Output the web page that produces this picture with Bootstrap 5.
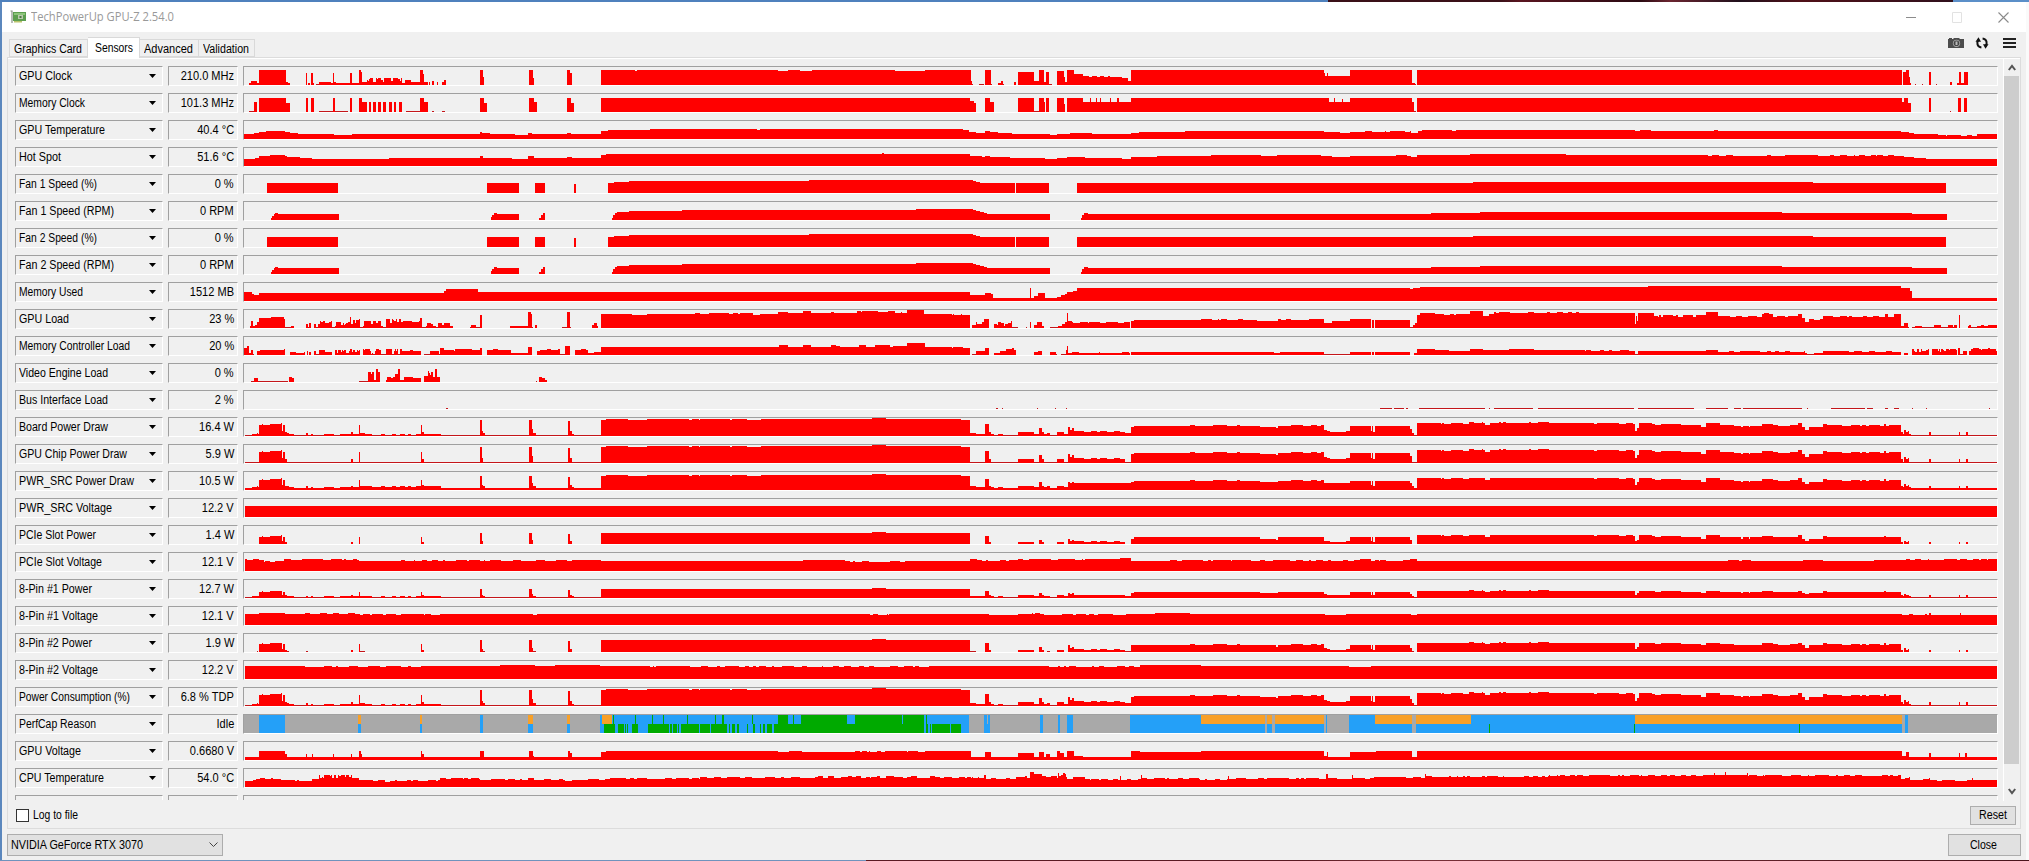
<!DOCTYPE html>
<html lang="en">
<head>
<meta charset="utf-8">
<title>TechPowerUp GPU-Z 2.54.0</title>
<link rel="stylesheet" href="https://cdn.jsdelivr.net/npm/bootstrap@5.3.0/dist/css/bootstrap.min.css">
<style>
html,body{height:100%;overflow:hidden}
body{font:12px/14px "Liberation Sans",Arial,sans-serif;color:#000;background:#f0f0f0}
.frame-top{height:2px;background:linear-gradient(90deg,#4f81bd 0 1328px,#3a1018 1328px 1500px,#5a1520 1520px,#2a0a12 1640px,#6b2530 1670px,#20101c 1740px,#501018 1800px,#30101c 1953px,#5b8fc8 1953px)}
.frame-bottom{height:1px;background:linear-gradient(90deg,#6f93bd 0 866px,#5a1a22 866px 1300px,#7a3038 1400px,#4a141c)}
.frame-left{width:2px;background:#5b87bd}
.frame-right{width:3px;background:#fafafa}
.titlebar{height:30px;padding:0 17px 0 8px;background:#fff}
.caption{font:12px/16px "Open Sans",sans-serif;color:#999;margin-left:5px}
.ctl{gap:35px}
.toolrow{height:25px;padding:0 9px 0 7px}
.tabs{height:20px}
.tab-item{height:18px;border:1px solid #d9d9d9;border-left:0;padding-top:2px;white-space:nowrap}
.tab-item:first-child{border-left:1px solid #d9d9d9}
.tab-item .fit{margin-left:4px}
.tab-item.active{height:21px;background:#fff;border-bottom:0;padding-top:3px;position:relative;z-index:2;margin-bottom:-1px}
.tab-item.active .fit{margin-left:7px}
.tool-icons{gap:10px;padding-top:3px}
.page{margin:0 5px;height:772px;border:1px solid #dcdcdc;box-shadow:inset 0 1px #fff}
.sensors{height:742px;padding:8px 5px 0 7px;overflow:hidden}
.sensor{height:20px;margin-bottom:7px}
.sunk{border:1px solid;border-color:#a0a0a0 #fff #fff #a0a0a0;height:20px;overflow:hidden;flex:none}
.name{width:148px;padding:0 6px 0 3px}
.reading{width:70px;margin:0 5px;padding-right:3px}
.reading span{white-space:nowrap;transform:scaleX(.92);transform-origin:right}
.plot{width:1755px}
.sunk svg,.name svg{display:block;flex:none}
.scrollbar-v{width:17px;height:742px;margin-top:1px;border-left:1px solid #fff;padding-right:1px}
.thumb{height:688px;background:#cdcdcd}
.arrow-cell{height:17px}
.arrow-cell.down{height:36px;padding-top:18px}
.logrow{height:28px;padding:0 4px 0 8px}
.box{width:13px;height:13px;border:1px solid #333;background:#fff}
.push{background:#e1e1e1;border:1px solid #adadad;border-radius:0;font-size:12px;line-height:14px;padding:0;color:#000}
.push.btn{text-align:left}
.footer-row{padding:5px 5px 0;height:31px}
.combo{width:216px;height:22px;padding:0 4px 0 3px}
.fit{display:inline-block;white-space:nowrap;transform-origin:left}
</style>
</head>
<body class="d-flex flex-column">
<div class="frame-top flex-shrink-0"></div>
<div class="d-flex flex-grow-1">
<div class="frame-left flex-shrink-0"></div>
<main class="flex-grow-1">
<header class="titlebar d-flex align-items-center">
<svg width="16" height="14" viewBox="0 0 16 14"><path d="M.5 1h1.500v12" fill="none" stroke="#8a938a" stroke-width="1.2"/><path d="M3 2h13v9H3z" fill="#5c9e4f"/><path d="M4 3h11v2H4z" fill="#8cc47a"/><path d="M8 5h5v4H8z" fill="#b8c9ad"/><path d="M9.500 6h2v2h-2z" fill="#4e7443"/><path d="M4 11h8v1.500H4z" fill="#b9c36b"/></svg>
<span class="caption me-auto"><span class="fit" data-w="143">TechPowerUp GPU-Z 2.54.0</span></span>
<div class="ctl d-flex align-items-center">
<svg width="11" height="11"><path d="M0 5.500h10" stroke="#8c8c8c"/></svg>
<svg width="11" height="11"><path d="M.5.5h9v10h-9z" fill="none" stroke="#e2e2e2"/></svg>
<svg width="11" height="11"><path d="M.5.5l10 10m0-10l-10 10" stroke="#8a8a8a" stroke-width="1.1"/></svg>
</div>
</header>
<div class="toolrow d-flex align-items-end">
<div class="tabs d-flex align-items-end me-auto">
<div class="tab-item" style="width:79px"><span class="fit" data-w="68">Graphics Card</span></div><div class="tab-item active" style="width:52px"><span class="fit" data-w="38">Sensors</span></div><div class="tab-item" style="width:59px"><span class="fit" data-w="49">Advanced</span></div><div class="tab-item" style="width:56px"><span class="fit" data-w="46">Validation</span></div>
</div>
<div class="tool-icons d-flex align-self-start align-items-center">
<svg width="17" height="16" viewBox="0 0 17 16"><path d="M0 4h1V3h3v1h1l1-1h5l1 1h4v9H0z" fill="#4c4c4c"/><circle cx="8.500" cy="8.300" r="3.600" fill="#aaa"/><circle cx="8.500" cy="8.300" r="2.800" fill="#444"/><path d="M7.500 6.500h2v3.500h-2z" fill="#bbb"/></svg>
<svg width="14" height="16" viewBox="0 0 14 16" fill="none" stroke="#111" stroke-width="2"><path d="M6.400 12.500C2 12 1.500 7.500 3.400 5.200"/><path d="M7.600 3.500C12 4 12.500 8.500 10.600 10.800"/><path d="M.5 6.800L3.500 2.300 6 6.800zM8 9.200h5.500L10.500 13.700z" fill="#111" stroke="none"/></svg>
<svg class="ms-1" width="14" height="16" viewBox="0 0 14 16"><path d="M0 4h13M0 8h13M0 12h13" stroke="#222" stroke-width="2"/></svg>
</div>
</div>
<section class="page">
<div class="d-flex">
<div class="sensors flex-grow-1" id="sensors"></div>
<div class="scrollbar-v flex-shrink-0">
<div class="arrow-cell d-flex align-items-center justify-content-center"><svg width="8" height="7"><path d="M.8 6L4 1.800 7.200 6" fill="none" stroke="#555" stroke-width="2"/></svg></div>
<div class="thumb"></div>
<div class="arrow-cell down d-flex align-items-center justify-content-center"><svg width="8" height="7"><path d="M.8 1L4 5.200 7.200 1" fill="none" stroke="#555" stroke-width="2"/></svg></div>
</div>
</div>
<div class="logrow d-flex align-items-center">
<label class="d-flex align-items-center me-auto"><span class="box"></span><span class="fit ms-1" data-w="45">Log to file</span></label>
<button class="btn push d-flex align-items-center" style="width:46px;height:19px;padding-left:8px"><span class="fit" data-w="28">Reset</span></button>
</div>
</section>
<div class="footer-row d-flex align-items-start">
<div class="push combo d-flex align-items-center justify-content-between me-auto"><span class="fit" data-w="132">NVIDIA GeForce RTX 3070</span><svg width="9" height="6"><path d="M.5.5l4 4 4-4" fill="none" stroke="#444"/></svg></div>
<button class="btn push d-flex align-items-center" style="width:73px;height:22px;padding-left:21px"><span class="fit" data-w="27">Close</span></button>
</div>
</main>
<div class="frame-right flex-shrink-0"></div>
</div>
<div class="frame-bottom flex-shrink-0"></div>

<script src="https://cdn.jsdelivr.net/npm/bootstrap@5.3.0/dist/js/bootstrap.bundle.min.js"></script>
<script>
// Histories are "x height" step pairs; "h~j" lets the height dip by up to j, in short runs.
const X0 = 244, XEND = 2000, H = 18;
// Samples after 1340 are spaced slightly tighter.
const px = x => (x <= 1340 ? x : Math.round(1340 + (x - 1340) * .9955)) - X0;
let seed = 7;
const rnd = () => (seed = (seed * 16807) % 2147483647) / 2147483647;
function expand(text) {
  const t = text.trim().split(/[\s,]+/), out = [];
  for (let i = 0; i < t.length; i += 2) {
    const x = +t[i], end = i + 2 < t.length ? +t[i + 2] : XEND;
    const [h, j] = t[i + 1].split('~').map(Number);
    if (!j) { out.push([x, end, h]); continue; }
    for (let p = x; p < end;) {
      const n = Math.min(end, p + 1 + Math.floor(rnd() * (j > 2 ? 2 : 7)));
      out.push([p, n, h - (rnd() < .5 ? Math.ceil(rnd() * j) : 0)]);
      p = n;
    }
  }
  return out;
}
function chart(segs) {
  let a = '', b = '';
  for (const [x, e, h] of segs) {
    if (h <= 0) continue;
    const r = `M${px(x)} ${H}v${-h}H${px(e)}v${h}z`;
    if (h <= 1) b += r; else a += r;
  }
  return `<path d="${a}" fill="#f00"/><path d="${b}" fill="#c4161a"/>`;
}
const draw = `245 1,252 2,257 3,258 2,259 11,262 12~1,281 13,282 5,283 11,285 4,287 3,289 2,294 1,306 3,308 1,311 2,313 1,318 2~1,351 4,353 2,359 11,360 3,365 2~1,406 2~1,420 2,421 11,422 4,424 2,441 1,480 16,482 5,483 3,485 1,529 16,532 7,533 3,536 1,568 15,570 5,572 2,574 1,601 16,606 17,628 16,636 16~1,647 17,684 17~1,703 17,730 17~1,753 16,761 17,872 18,886 17,961 16,970 3,976 2,985 12,989 4,991 2,994 1,998 2,1003 1,1018 4,1034 2,1039 8,1042 4,1044 2,1047 3,1050 1,1057 4,1064 2,1068 9,1070 6,1072 8,1074 5,1084 5~1,1125 3,1131 9,1134 10,1190 11~1,1240 10,1260 9,1276 8,1278 11~1,1324 6,1327 5,1330 4,1346 5,1350 10,1371 5,1372 10,1373 4,1375 10,1410 7,1412 3,1414 1,1417 13,1434 13~1,1470 14~1,1486 11,1491 13,1500 14~1,1550 13,1590 13~1,1636 5,1638 8,1640 13~1,1656 12~1,1703 9,1708 13,1722 12~1,1736 10~1,1764 12,1775 11~1,1800 13,1804 9,1807 6,1811 9~1,1825 12,1829 11~1,1886 12,1888 10,1891 11,1904 4,1906 2,1907 6,1909 4,1911 5,1912 2,1914 1,1932 4,1934 1,1962 4,1963 1,1969 4,1971 1`;
function power(scale, base, cut) {
  seed = 7;
  return expand(draw).map(([x, e, h]) => [x, e, h < cut ? base : Math.max(base, Math.round(base + (h - 1) * scale))]);
}
const fan = '267 10,338 0,487 10,519 0,535 10,545 0,574 9,576 0,608 10,614 11,629 12,809 13,973 12,976 11,980 10,1015 0,1016 10,1049 0,1077 10,1474 11,1815 10,1949 0';
const rpm = '271 2,272 4,274 6,275 7,278 6,339 0,491 3,492 5,494 7,497 6,519 0,539 2,541 5,543 7,545 0,612 2,613 5,615 7,617 8,629 9,682 10,916 11,973 10,976 9,980 8,984 7,987 6,1050 0,1081 2,1082 5,1084 7,1088 6,1431 7,1481 8,1784 7,1915 6,1950 0';
const rows = [
 ['GPU Clock',53,'210.0 MHz','249 2,251 4~1,257 2,259 15,286 3,288 2,290 0,306 12,307 0,308 2,310 0,311 12,313 2,314 0,316 1,319 3~1,333 12,334 3,336 2,350 12,352 3~1,359 15,361 13,362 3,367 7~4,402 2,405 5~2,420 15,423 11,424 3,428 0,429 3,430 0,432 4,434 0,437 3,438 0,442 3,444 5,446 0,480 15,483 8,484 0,529 15,533 7,534 0,567 15,570 12,572 0,601 15,635 14,637 15,778 14,788 15,800 14,812 15,895 14,925 15,971 4,972 1,973 0,979 1,984 0,985 15,991 1,992 0,998 2,1001 4,1003 1,1004 0,1014 3,1016 0,1018 13,1034 4,1039 15,1044 3,1046 13,1049 1,1052 0,1057 14,1064 8,1065 3,1067 15,1074 11,1083 9~1,1110 8,1122 7,1128 4,1131 15,1324 12,1325 9,1327 12,1328 9,1350 15,1412 2,1415 1,1416 0,1417 15,1905 0,1906 13,1909 15,1912 8,1913 2,1914 0,1918 1,1919 0,1925 1,1926 0,1932 13,1934 0,1939 1,1940 0,1953 3,1955 0,1960 2,1962 13,1964 2,1967 13,1971 0'],
 ['Memory Clock',66,'101.3 MHz','249 1,254 10,257 0,259 14,286 9,290 0,306 14,308 0,311 14,314 0,319 1,333 14,335 1,348 0,350 14,352 0,359 14,362 10,367 0,369 10,371 0,373 10,376 0,378 10,381 0,383 10,386 0,389 10,392 0,394 10,396 0,399 10,402 0,406 1,420 14,424 10,428 0,432 1,434 0,442 1,445 0,480 14,484 9,487 0,529 14,534 10,537 0,567 14,571 9,574 0,601 14,970 11,974 9,976 0,985 14,990 10,994 0,1018 14,1034 1,1039 14,1044 10,1045 0,1046 14,1049 0,1057 14,1064 8,1065 0,1067 14,1083 10,1090 14,1091 10,1096 14,1097 10,1100 14,1101 10,1110 14,1111 10,1117 14,1119 10,1131 14,1329 10,1334 14,1335 10,1342 13,1343 10,1350 14,1412 10,1414 1,1416 0,1417 14,1905 10,1907 14,1911 9,1914 0,1932 14,1934 0,1953 1,1954 0,1961 14,1964 0,1967 14,1970 0'],
 ['GPU Temperature',86,'40.4 °C','244 5,254 6,259 7,266 8,285 7,290 6,298 5,334 4,352 5,480 7,482 6,490 5,515 4,528 6,532 5,567 6,571 5,601 8,608 9,650 10,757 9,760 10,963 9,969 7,976 6,985 8,990 7,998 6,1012 5,1050 4,1057 5,1070 6,1092 5,1131 6,1139 7,1185 8,1324 7,1340 6,1350 7,1360 8~1,1411 6,1418 8,1422 9,1453 8,1457 9,1467 9,1636 8,1641 9,1652 8,1716 9,1720 8,1904 7,1912 6,1917 5,1941 4~1,1980 5'],
 ['Hot Spot',42,'51.6 °C','244 7,255 8,259 10,270 11,285 10,287 9,300 8,312 7,389 8,480 10,483 8,512 7,528 10,534 8,567 9,572 8,601 11,606 12,882 13,884 12,970 10,982 9,985 10,990 9,1010 8,1045 7,1057 8,1067 9,1085 8,1122 7,1131 9,1157 10,1211 11,1261 10,1277 11,1321 10,1332 9,1350 10,1396 11~1,1411 9,1417 11,1471 12,1495 12,1567 11,1696 11~1,1740 10,1765 11~1,1900 10,1907 9,1917 8,1929 7'],
 ['Fan 1 Speed (%)',78,'0 %',fan],['Fan 1 Speed (RPM)',95,'0 RPM',rpm],['Fan 2 Speed (%)',78,'0 %',fan],['Fan 2 Speed (RPM)',95,'0 RPM',rpm],
 ['Memory Used',64,'1512 MB','244 9,252 7,254 6,259 8,444 10,446 12,478 9,970 6,985 8,991 7,993 3,1030 13,1031 3,1034 5,1038 8,1045 3,1057 4,1061 6,1065 7,1067 9,1073 10,1077 13,1410 12,1413 13,1420 14,1649 15,1904 13,1913 10,1915 3'],
 ['GPU Load',50,'23 %','250 2,251 7,253 2,255 3,257 6,259 10,271 11,284 9,285 1,291 2,294 0,306 4,308 1,309 5,311 0,314 4,316 1,318 7~3,332 1,335 6~4,350 11,351 4,353 8~5,359 9,360 1,363 7~5,383 1,386 9~5,402 7~1,420 10,422 1,424 5~4,450 2,453 0,470 3~2,480 13,482 0,510 2,528 16,531 14,532 1,533 0,535 3,537 0,562 1,567 16,570 1,571 0,592 3,594 5,597 2,598 0,601 14,632 13,647 14,695 15~1,753 13,760 14,778 16,788 15,803 17,811 15,831 16,834 15,857 17~1,895 15,901 16~1,907 18,924 14,950 14~1,962 13,970 0,972 3,976 6~2,984 9,989 0,994 4~3,998 6,1001 5~4,1011 7,1012 1,1018 0,1026 1,1027 0,1030 6,1031 0,1034 3,1037 6,1042 2,1044 0,1050 1,1058 2,1062 4,1065 6,1067 15,1068 7,1072 6~1,1130 0,1131 7,1134 8,1201 9~1,1257 7,1278 9~1,1324 5~1,1332 7~1,1350 9,1371 0,1372 8,1374 0,1375 8,1410 1,1413 3,1415 5,1417 13,1420 15,1435 14~1,1471 17,1484 14~2,1495 16~1,1580 15,1636 4,1637 12,1638 7,1639 15,1655 13~2,1708 16,1720 12~1,1764 15~1,1775 12~1,1800 14,1804 10,1807 6,1811 9~1,1825 12~1,1887 14,1890 11,1897 14,1904 2,1907 5,1911 1,1912 0,1915 2~1,1937 3~2,1960 0,1962 13,1963 0,1971 3~2'],
 ['Memory Controller Load',111,'20 %','244 7,247 9,249 2,251 5,253 1,254 0,257 4,260 6~1,285 0,290 3~1,305 0,307 4,308 0,309 3,311 0,314 4,316 1,319 5~2,332 0,335 5~3,350 6,352 5~4,360 0,363 6~5,383 1,386 6~5,402 5~1,421 0,424 4~3,440 7,444 5~1,455 7~1,472 5~1,480 7,482 0,487 6~1,511 2,528 8,532 0,537 4,540 6~1,560 1,565 9,570 0,575 6~1,588 3~1,601 8,779 10,788 8,803 10,811 8,831 10~1,840 8,857 10~2,895 9,907 12,925 8,945 8~1,964 7,970 0,972 1,976 4~2,985 7,989 0,994 4~2,1006 7~1,1014 5,1016 0,1034 3,1038 4,1042 0,1050 3,1056 1,1057 0,1061 1,1066 5,1067 9,1068 2,1072 3~1,1130 0,1131 3,1260 3~1,1280 3,1324 1,1350 3,1371 0,1372 3,1374 0,1375 3,1410 0,1414 2,1417 6,1435 5~1,1471 6,1484 5,1510 6,1535 5,1580 5~1,1636 1,1639 4,1708 5,1720 4~1,1807 2~1,1825 4~1,1904 0,1907 2,1911 0,1915 6~3,1932 0,1935 6~3,1960 0,1961 7,1963 1,1966 4,1970 0,1972 7~3'],
 ['Video Engine Load',89,'0 %','251 1,254 4,258 1,288 0,289 5,292 4,294 0,359 1,368 10~2,374 2,376 13,378 10,380 0,386 5~4,395 8,398 13,400 2,404 5~2,421 0,424 6,428 11~6,435 13,437 5,440 0,536 1,537 0,539 5,542 4,545 2,547 0'],
 ['Bus Interface Load',89,'2 %','446 1,448 0,996 1,998 0,1002 1,1003 0,1037 1,1038 0,1055 1,1056 0,1066 1,1067 0,1380 1,1392 0,1394 1,1404 0,1406 1,1408 0,1419 1,1486 0,1490 1,1491 0,1495 1,1534 0,1539 1,1635 0,1639 1,1696 0,1708 1,1730 0,1736 1,1743 0,1745 1,1804 0,1809 1,1810 0,1833 1,1867 0,1869 1,1875 0,1887 1,1890 0,1897 1,1902 0,1915 1,1916 0,1929 1,1930 0,1992 1,1993 0'],
 ['Board Power Draw',89,'16.4 W',power(1,1,2)],
 ['GPU Chip Power Draw',108,'5.9 W',power(1,1,4)],
 ['PWR_SRC Power Draw',115,'10.5 W',power(.8,2,2).map(([x,e,h])=>[x,e,(x>1067&&x<1131)||(x>=1324&&x<1350)?Math.max(h,7):x>290&&x<440&&h<5?h+(x>360?1:0):h])],
 ['PWR_SRC Voltage',93,'12.2 V','245 11'],
 ['PCIe Slot Power',77,'1.4 W',power(.64,0,4).map(([x,e,h])=>[x,e,h>5?h+1:h])],
 ['PCIe Slot Voltage',83,'12.1 V','245 12~1,259 11,264 10~1,284 12~1,359 10,362 11~1,480 10,484 11~1,529 10,536 11~1,568 10,572 11,601 10,770 10,803 11,845 10~1,905 10,970 12,977 11~1,1018 12~1,1085 12,1120 13,1131 10,1170 11~1,1360 12,1371 11~1,1410 12,1417 10,1700 10,1730 11~1,1760 10,1805 11,1825 10,1876 11,1904 12~1'],
 ['8-Pin #1 Power',73,'12.7 W',power(.5,1,2)],
 ['8-Pin #1 Voltage',79,'12.1 V','245 11~1,259 12,285 11,305 12~1,360 11~1,440 11,533 10,537 11,866 11~1,925 11,989 10,1018 12~1,1040 11~1,1131 11,1155 12,1190 11,1325 10,1346 11,1411 10,1417 11,1904 11~1,1932 12,1934 10,1963 12,1964 10'],
 ['8-Pin #2 Power',73,'1.9 W',power(.7,0,3).map(([x,e,h])=>[x,e,h>5?h+1:h])],
 ['8-Pin #2 Voltage',79,'12.2 V','245 13,305 13~1,425 13,500 14,535 13,555 14,600 13,650 13~1,930 13,1048 13~1,1140 14,1201 13,1349 12,1371 13'],
 ['Power Consumption (%)',111,'6.8 % TDP',power(1,1,2)],
 ['PerfCap Reason',77,'Idle',null],
 ['GPU Voltage',62,'0.6680 V','245 3,259 9,285 6,287 3,306 6,307 3,312 6,313 3,333 6,334 3,351 6,352 3,359 9,361 6,362 3,421 9,422 6,424 3,480 9,484 3,529 9,533 4,534 3,568 9,570 7,572 3,601 8,606 9,778 8,789 9,802 8,848 9~1,925 9,971 3,985 8,991 3,1018 7,1034 3,1039 8,1044 3,1046 6,1050 3,1057 9,1060 7,1064 3,1067 9,1074 4,1083 3,1130 3,1131 9,1140 8,1201 9,1324 4,1327 8,1328 3,1350 8,1376 9,1412 3,1417 9,1905 4,1909 8,1912 3,1932 7,1934 3,1962 7,1963 3,1968 7,1970 3'],
 ['CPU Temperature',85,'54.0 °C','245 7~1,256 9~1,275 8~1,295 7~1,312 9~1,319 12~3,355 9,359 7~2,395 7~1,440 9~1,480 8~1,528 10~2,534 8~1,565 6,572 8~1,605 9~1,700 10~1,800 11~2,935 10~1,984 12,986 9~1,1016 11~2,1030 15,1034 13~2,1042 11~2,1058 14~3,1066 10~2,1085 8~1,1120 11,1121 8~1,1141 12,1142 9~1,1200 8~1,1228 11,1229 9~1,1326 13,1328 9~1,1352 12,1353 9~1,1374 10~1,1425 13,1426 11~1,1550 12,1551 12~1,1716 14,1717 12~1,1727 15,1728 12~1,1749 14,1750 12~1,1904 10~2,1913 8~1,1932 9,1933 7~1,1975 9,1976 7'],
 ['',0,'','']
];
// Limiter bands: x, end, row half (t, b, or f for both), colour.
const B='#24a0f8',O='#f8a028',G='#00aa00';
function limiter() {
  let s = `<path d="M0 0h1753v18H0z" fill="#a9a9a9"/>`;
  const r = (x, e, p, c) => s += `<path d="M${px(x)} ${p === 'b' ? 9 : 0}H${px(e)}v${p === 'f' ? 18 : 9}H${px(x)}z" fill="${c}"/>`;
  r(259,285,'f',B);
  [[358,361],[420,422],[528,533],[567,570]].forEach(([a,b])=>{r(a,b,'t',O);r(a,b,'b',B)});
  r(480,483,'f',B); r(600,969,'f',B); r(602,612,'t',O);
  [[604,615],[618,624],[625,626],[627,628],[632,638],[648,669],[670,672],[673,677],[678,679],[681,699],[700,710],[711,727],[729,730],[732,735],[737,739],[747,748],[753,755],[760,761],[763,765],[767,772],[774,924],[926,928],[930,931],[932,950],[951,961]].forEach(([a,b])=>r(a,b,'b',G));
  [[613,614],[635,636],[652,653],[663,664],[687,688],[715,716],[722,724],[752,753],[778,788],[793,794],[801,847],[855,902],[903,924],[926,927]].forEach(([a,b])=>r(a,b,'t',G));
  [[984,990],[1040,1043],[1058,1060],[1067,1073],[1130,1324],[1326,1327],[1349,1412],[1416,1905],[1908,1911]].forEach(([a,b])=>r(a,b,'f',B));
  r(987,988,'t','#a9a9a9');
  [[1201,1324],[1375,1412],[1416,1472],[1636,1905]].forEach(([a,b])=>r(a,b,'t',O));
  r(1265,1267,'f','#a9a9a9'); r(1272,1275,'f','#a9a9a9');
  r(1490,1491,'b',G); r(1635,1636,'b',G); r(1801,1802,'b',G);
  return s;
}
document.getElementById('sensors').innerHTML = rows.map(([n, w, v, d]) => `
<div class="sensor d-flex">
<div class="sunk name d-flex align-items-center"><span class="fit me-auto" data-w="${w}" style="width:${w}px">${n}</span>${n ? '<svg width="7" height="4"><path d="M0 0h7L3.500 4z"/></svg>' : ''}</div>
<div class="sunk reading d-flex align-items-center justify-content-end"><span>${v}</span></div>
<div class="sunk plot"><svg width="1753" height="18" shape-rendering="crispEdges">${d === null ? limiter() : d ? chart(typeof d === 'string' ? expand(d) : d) : ''}</svg></div>
</div>`).join('');
// Condense each label to its designed width.
document.querySelectorAll('.fit').forEach(e => {
  const w = +e.dataset.w;
  if (!w) return;
  e.style.width = 'max-content';
  const real = e.getBoundingClientRect().width;
  e.style.width = w + 'px';
  e.style.transform = `scaleX(${(w / real).toFixed(4)})`;
  e.style.width = real + 'px';
  e.style.marginRight = (w - real) + 'px';
});
</script>
</body>
</html>
